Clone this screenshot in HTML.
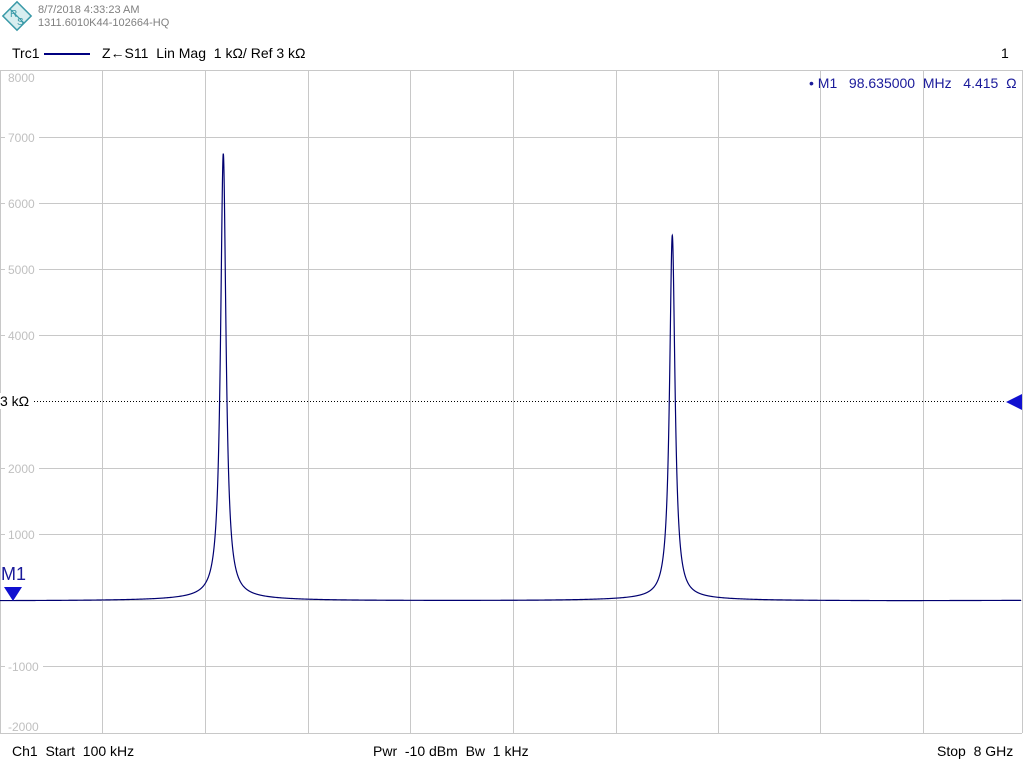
<!DOCTYPE html>
<html><head><meta charset="utf-8"><style>
html,body{margin:0;padding:0;background:#fff;width:1024px;height:768px;overflow:hidden}
body{position:relative;font-family:"Liberation Sans",sans-serif}
.t{position:absolute;white-space:nowrap}
</style></head><body>
<svg width="1024" height="768" style="position:absolute;left:0;top:0">
<g transform="translate(3,2)">
<rect x="4" y="4" width="20" height="20" transform="rotate(45 14 14)" fill="#d8eef0" stroke="#3a9aa8" stroke-width="1.5"/>
<line x1="7" y1="7" x2="21" y2="21" stroke="#3a9aa8" stroke-width="1.2"/>
<text x="7" y="15" font-size="10" fill="#3a9aa8" font-family="Liberation Sans">R</text>
<text x="14" y="23" font-size="10" fill="#3a9aa8" font-family="Liberation Sans">S</text>
</g>
<g stroke="#c8c8c8" stroke-width="1">
<line x1="0" y1="70.5" x2="1022" y2="70.5"/>
<line x1="0" y1="137.5" x2="1022" y2="137.5"/>
<line x1="0" y1="203.5" x2="1022" y2="203.5"/>
<line x1="0" y1="269.5" x2="1022" y2="269.5"/>
<line x1="0" y1="335.5" x2="1022" y2="335.5"/>
<line x1="0" y1="468.5" x2="1022" y2="468.5"/>
<line x1="0" y1="534.5" x2="1022" y2="534.5"/>
<line x1="0" y1="600.5" x2="1022" y2="600.5"/>
<line x1="0" y1="666.5" x2="1022" y2="666.5"/>
<line x1="0" y1="733.5" x2="1022" y2="733.5"/>
<line x1="0.5" y1="70" x2="0.5" y2="733"/>
<line x1="102.5" y1="70" x2="102.5" y2="733"/>
<line x1="205.5" y1="70" x2="205.5" y2="733"/>
<line x1="308.5" y1="70" x2="308.5" y2="733"/>
<line x1="410.5" y1="70" x2="410.5" y2="733"/>
<line x1="513.5" y1="70" x2="513.5" y2="733"/>
<line x1="616.5" y1="70" x2="616.5" y2="733"/>
<line x1="718.5" y1="70" x2="718.5" y2="733"/>
<line x1="820.5" y1="70" x2="820.5" y2="733"/>
<line x1="923.5" y1="70" x2="923.5" y2="733"/>
<line x1="1022.5" y1="70" x2="1022.5" y2="733"/>
</g>
<line x1="34" y1="401.5" x2="1006" y2="401.5" stroke="#000" stroke-width="1" stroke-dasharray="1,2"/>
<g font-size="12" fill="#c0c0c0" font-family="Liberation Sans">
<rect x="6" y="72" width="32" height="12" fill="#fff"/><text x="8" y="82">8000</text>
<rect x="5" y="131" width="34" height="13" fill="#fff"/><text x="8" y="142">7000</text>
<rect x="5" y="197" width="34" height="13" fill="#fff"/><text x="8" y="208">6000</text>
<rect x="5" y="263" width="34" height="13" fill="#fff"/><text x="8" y="274">5000</text>
<rect x="5" y="329" width="34" height="13" fill="#fff"/><text x="8" y="340">4000</text>
<rect x="5" y="462" width="34" height="13" fill="#fff"/><text x="8" y="473">2000</text>
<rect x="5" y="528" width="34" height="13" fill="#fff"/><text x="8" y="539">1000</text>
<rect x="5" y="660" width="38" height="13" fill="#fff"/><text x="8" y="671">-1000</text>
<rect x="5" y="720" width="38" height="12" fill="#fff"/><text x="8" y="731">-2000</text>
</g>
<path id="tr" fill="none" stroke="#000070" stroke-width="1.2" d=""/>
<polygon points="4,587 22,587 13,601" fill="#1010d0"/>
<polygon points="1006,402 1022,394 1022,410" fill="#1010d0"/>
</svg>
<div class="t" style="left:38px;top:4px;font-size:11px;color:#808080;line-height:13px">8/7/2018 4:33:23 AM<br>1311.6010K44-102664-HQ</div>
<div class="t" style="left:12px;top:45px;font-size:14px;color:#000">Trc1</div>
<div style="position:absolute;left:44px;top:53px;width:46px;height:2px;background:#000080"></div>
<div class="t" style="left:102px;top:45px;font-size:14px;color:#000">Z←S11 &nbsp;Lin Mag &nbsp;1 kΩ/ Ref 3 kΩ</div>
<div class="t" style="left:1001px;top:45px;font-size:14px;color:#000">1</div>
<div class="t" style="left:809px;top:75px;font-size:14px;color:#1a1a9a">• M1 &nbsp;&nbsp;98.635000 &nbsp;MHz &nbsp;&nbsp;4.415 &nbsp;Ω</div>
<div class="t" style="left:0px;top:393px;font-size:14px;color:#000;background:#fff">3 kΩ</div>
<div class="t" style="left:1px;top:564px;font-size:18px;color:#1a1a9a">M1</div>
<div class="t" style="left:12px;top:743px;font-size:14px;color:#000">Ch1 &nbsp;Start &nbsp;100 kHz</div>
<div class="t" style="left:373px;top:743px;font-size:14px;color:#000">Pwr &nbsp;-10 dBm &nbsp;Bw &nbsp;1 kHz</div>
<div class="t" style="left:937px;top:743px;font-size:14px;color:#000">Stop &nbsp;8 GHz</div>
<script>
var d="";
function v(x){var a=6700/(1+Math.pow((x-223.3)/3.3,2))+5480/(1+Math.pow((x-672.3)/3.3,2));
var b=40/(1+Math.pow((x-223)/60,2))+40/(1+Math.pow((x-672)/60,2))+15/(1+Math.pow((x-223)/25,2));
return a+b-6+Math.max(0,(x-900))*0.05;}
for(var x=0;x<=1022;x+=(Math.abs(x-223)<40||Math.abs(x-672)<40)?0.1:1){var y=600.5-v(x)*0.0662;d+=(d?"L":"M")+x.toFixed(2)+","+y.toFixed(2);}
document.getElementById("tr").setAttribute("d",d);
</script>
</body></html>
